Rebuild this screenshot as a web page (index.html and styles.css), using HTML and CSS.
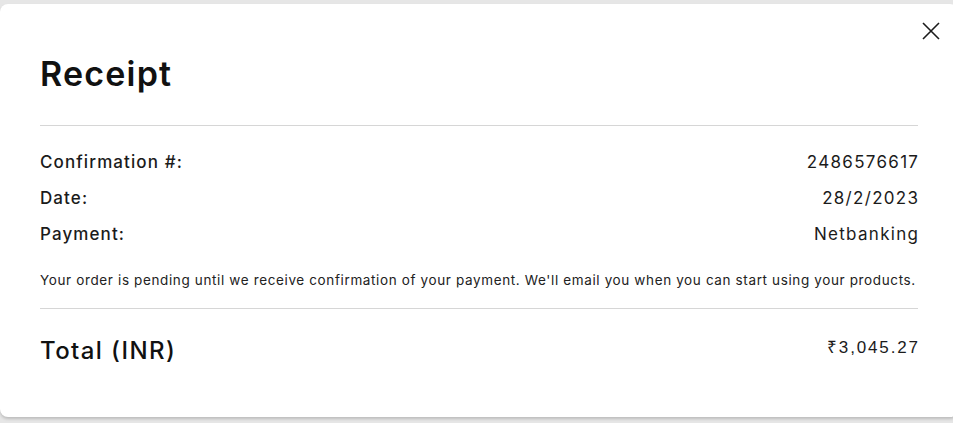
FILE: index.html
```html
<!DOCTYPE html>
<html lang="en">
<head>
<meta charset="utf-8">
<title>Receipt</title>
<link rel="stylesheet" href="styles.css">
</head>
<body>
<div class="modal">
  <button class="close" aria-label="Close">
    <svg width="20" height="20" viewBox="0 0 20 20"><path d="M2 2 L18 18 M18 2 L2 18" stroke="#1b1b1b" stroke-width="1.6" fill="none"/></svg>
  </button>
  <h1 class="title">Receipt</h1>
  <div class="rows">
    <div class="row"><span class="label">Confirmation #:</span><span class="value">2486576617</span></div>
    <div class="row"><span class="label">Date:</span><span class="value">28/2/2023</span></div>
    <div class="row"><span class="label">Payment:</span><span class="value">Netbanking</span></div>
  </div>
  <p class="note">Your order is pending until we receive confirmation of your payment. We'll email you when you can start using your products.</p>
  <div class="total">
    <span class="total-label">Total (INR)</span>
    <span class="total-value">₹3,045.27</span>
  </div>
</div>
</body>
</html>
```
FILE: styles.css
```css
html, body {
  margin: 0;
  padding: 0;
}
body {
  background: #e6e6e6;
  overflow: hidden;
  width: 953px;
  height: 423px;
  font-family: "Inter", "Open Sans", sans-serif;
  color: #111111;
}
.modal {
  position: relative;
  margin-top: 4px;
  width: 958px;
  height: 413px;
  box-sizing: border-box;
  background: #ffffff;
  border-radius: 8px;
  box-shadow: 0 2px 3px rgba(0, 0, 0, 0.18);
  padding: 50px 40px 0 40px;
}
.close {
  position: absolute;
  top: 17px;
  left: 921px;
  width: 20px;
  height: 20px;
  padding: 0;
  border: 0;
  background: transparent;
  display: flex;
  align-items: center;
  justify-content: center;
}
.title {
  margin: 0;
  font-size: 34px;
  line-height: 40px;
  font-weight: 600;
  letter-spacing: 1.2px;
  padding-bottom: 31px;
  border-bottom: 1px solid #d6d6d6;
}
.rows {
  display: flex;
  flex-direction: column;
  gap: 12px;
  padding-top: 24px;
}
.row {
  display: flex;
  justify-content: space-between;
  font-size: 17px;
  line-height: 24px;
  color: #1b1b1b;
}
.label {
  font-weight: 500;
  letter-spacing: 1.1px;
}
.value {
  letter-spacing: 1.3px;
  margin-right: -1.3px;
}
.note {
  margin: 24px 0 0 0;
  font-size: 13.5px;
  line-height: 20px;
  letter-spacing: 0.63px;
  color: #222222;
  padding-bottom: 18px;
  border-bottom: 1px solid #d6d6d6;
}
.total {
  display: flex;
  justify-content: space-between;
  align-items: flex-start;
  padding-top: 27px;
}
.total-label {
  font-size: 24px;
  line-height: 30px;
  font-weight: 500;
  letter-spacing: 1.4px;
}
.total-value {
  font-family: "Liberation Sans", Arial, sans-serif;
  font-size: 17px;
  line-height: 24px;
  letter-spacing: 1.85px;
  margin-right: -1.85px;
  color: #1b1b1b;
}
```
